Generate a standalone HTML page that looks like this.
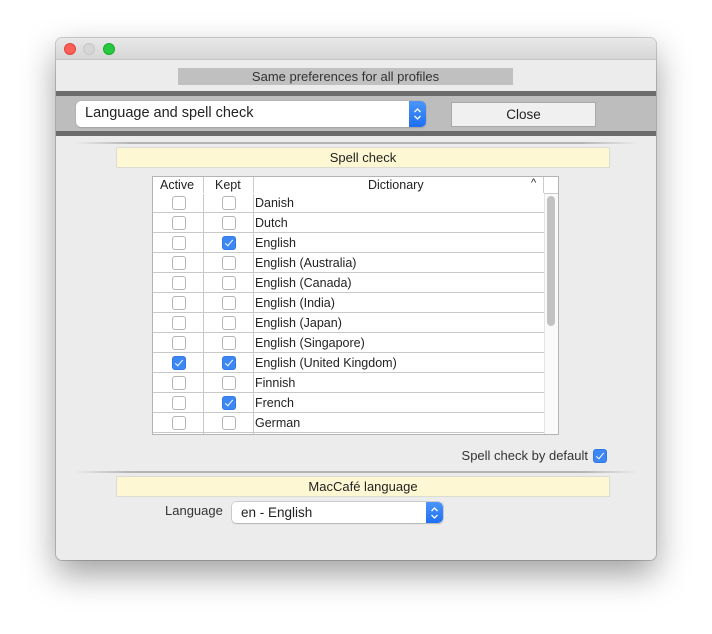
<!DOCTYPE html>
<html><head><meta charset="utf-8"><style>
*{box-sizing:border-box;margin:0;padding:0}
body{width:712px;height:634px;background:#fff;position:relative;overflow:hidden;font-family:"Liberation Sans",sans-serif;font-size:12.5px;color:#222}
.a{position:absolute}
.win{left:56px;top:38px;width:600px;height:522px;background:#ececec;border-radius:6px;box-shadow:0 14px 34px rgba(0,0,0,.38),0 0 0 1px rgba(0,0,0,.18);overflow:hidden}
.tb{left:0;top:0;width:600px;height:22px;background:linear-gradient(#e8e8e8,#d6d6d6);border-bottom:1px solid #c4c4c4}
.dot{width:12px;height:12px;border-radius:50%;top:5px}
.cb{width:14px;height:14px;border:1px solid #b4b4b4;border-radius:3px;background:#fff}
.cb.on{background:#3d87f5;border-color:#2f77e4}
.cb.on::after{content:"";position:absolute;left:4px;top:1px;width:3px;height:7px;border:solid #fff;border-width:0 1.6px 1.6px 0;transform:rotate(40deg)}
.row{position:absolute;left:0;width:391px;height:20px;border-bottom:1px solid #c8c8c8;background:#fff}
.row span{position:absolute;left:102px;top:3px;font-size:12.5px}
.stepper{position:absolute;right:0;top:0;width:17px;height:100%;background:linear-gradient(#4c95fb,#1f6ff2);border-radius:0 5px 5px 0}
.stepper svg{position:absolute;left:4px;top:50%;margin-top:-7px}
.yel{background:#fdf8d3;border:1px solid #dcdcd4;text-align:center;font-size:13px;line-height:19px}
.sep{height:2px;background:linear-gradient(90deg,rgba(180,180,180,0),#b4b4b4 10%,#b4b4b4 90%,rgba(180,180,180,0))}
</style></head><body>
<div class="a win">
 <div class="a tb"></div>
 <div class="a dot" style="left:8px;background:#fe5f57;border:1px solid #e0443e"></div>
 <div class="a dot" style="left:27px;background:#d6d6d6;border:1px solid #c6c6c6"></div>
 <div class="a dot" style="left:47px;background:#28c840;border:1px solid #1aab29"></div>
 <div class="a" style="left:122px;top:30px;width:335px;height:17px;background:#c0c0c0;text-align:center;line-height:17px;font-size:13px;color:#333">Same preferences for all profiles</div>
 <div class="a" style="left:0;top:53px;width:600px;height:45px;background:#bdbdbd;border-top:5px solid #6b6b6b;border-bottom:5px solid #6b6b6b"></div>
 <div class="a" style="left:20px;top:63px;width:350px;height:26px;background:#fff;border-radius:5px;box-shadow:0 0 0 .5px #aaa,0 1px 1px rgba(0,0,0,.2)"><span class="a" style="left:9px;top:4px;font-size:14.5px">Language and spell check</span><div class="stepper"><svg width="9" height="14"><path d="M1.5 5L4.5 2L7.5 5M1.5 9L4.5 12L7.5 9" fill="none" stroke="#fff" stroke-width="1.3"/></svg></div></div>
 <div class="a" style="left:395px;top:64px;width:145px;height:25px;background:#f0f0f0;border:1px solid #a9a9a9;text-align:center;line-height:24px;font-size:13.5px">Close</div>
 <div class="a sep" style="left:18px;top:104px;width:564px"></div>
 <div class="a yel" style="left:60px;top:109px;width:494px;height:21px">Spell check</div>
 <div class="a" style="left:96px;top:138px;width:407px;height:259px;background:#fff;border:1px solid #b4b4b4;overflow:hidden">
  <div class="a" style="left:0;top:0;width:405px;height:17px;border-bottom:1px solid #c8c8c8;background:#fff">
   <span class="a" style="left:7px;top:1px">Active</span>
   <div class="a" style="left:50px;top:0;width:1px;height:17px;background:#ccc"></div>
   <span class="a" style="left:62px;top:1px">Kept</span>
   <div class="a" style="left:100px;top:0;width:1px;height:17px;background:#ccc"></div>
   <span class="a" style="left:215px;top:1px">Dictionary</span>
   <span class="a" style="left:378px;top:0;font-size:11px">^</span>
   <div class="a" style="left:390px;top:0;width:1px;height:17px;background:#ccc"></div>
  </div>
  <div class="a" style="left:0;top:17px;width:405px;height:242px">
   <div class="a" style="left:391px;top:0;width:14px;height:242px;background:#fafafa;border-left:1px solid #e4e4e4"></div>
   <div class="a" style="left:394px;top:2px;width:8px;height:130px;background:#c2c2c2;border-radius:4px"></div>
   <div class="a" style="left:50px;top:0;width:1px;height:242px;background:#c8c8c8;z-index:2"></div>
   <div class="a" style="left:100px;top:0;width:1px;height:242px;background:#c8c8c8;z-index:2"></div>
  </div>
 </div>
 <div id="rows" class="a" style="left:97px;top:155px;width:391px;height:241px;overflow:hidden"></div>
 <span class="a" style="right:68px;top:410px;font-size:13px;color:#333">Spell check by default</span>
 <div class="a cb on" style="left:537px;top:411px"></div>
 <div class="a sep" style="left:18px;top:433px;width:564px"></div>
 <div class="a yel" style="left:60px;top:438px;width:494px;height:21px">MacCafé language</div>
 <span class="a" style="left:109px;top:465px;font-size:13px;color:#333">Language</span>
 <div class="a" style="left:176px;top:464px;width:211px;height:21px;background:#fff;border-radius:4px;box-shadow:0 0 0 .5px #aaa,0 1px 1px rgba(0,0,0,.2)"><span class="a" style="left:9px;top:3px;font-size:13.5px">en - English</span><div class="stepper"><svg width="9" height="14"><path d="M1.5 5L4.5 2L7.5 5M1.5 9L4.5 12L7.5 9" fill="none" stroke="#fff" stroke-width="1.3"/></svg></div></div>
</div>
<script>
var d=[["Danish",0,0],["Dutch",0,0],["English",0,1],["English (Australia)",0,0],["English (Canada)",0,0],["English (India)",0,0],["English (Japan)",0,0],["English (Singapore)",0,0],["English (United Kingdom)",1,1],["Finnish",0,0],["French",0,1],["German",0,0],["Greek",0,0]];
var h="";d.forEach(function(r,i){h+='<div class="row" style="top:'+(i*20)+'px"><div class="a cb'+(r[1]?' on':'')+'" style="left:19px;top:3px"></div><div class="a cb'+(r[2]?' on':'')+'" style="left:69px;top:3px"></div><span>'+r[0]+'</span></div>';});
document.getElementById("rows").innerHTML=h;
</script>
</body></html>
